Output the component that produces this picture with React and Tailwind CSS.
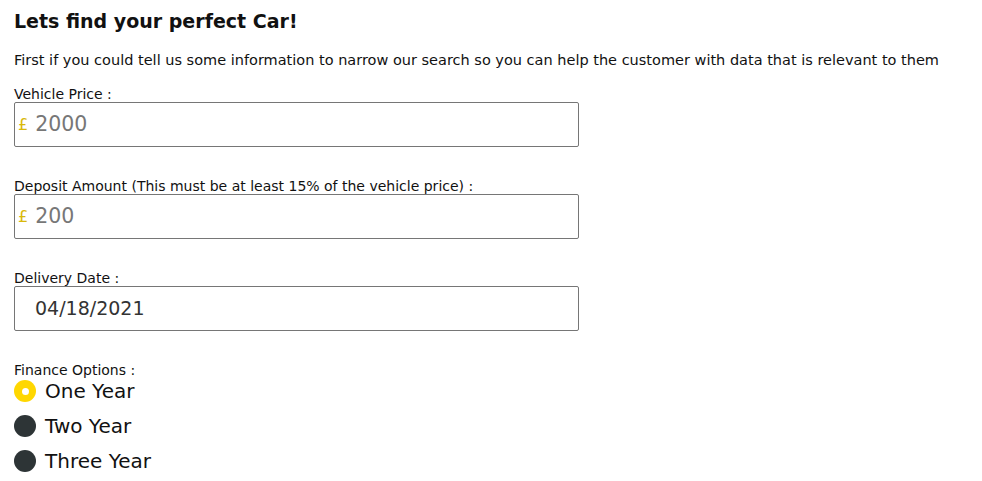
import { useState } from 'react';

const font = { fontFamily: '"DejaVu Sans", sans-serif' };

function MoneyField({ label, value }) {
  return (
    <div className="flex flex-col">
      <label className="text-[14px] leading-[16px] text-[#111]">{label}</label>
      <div className="w-[565px] h-[45px] border border-[#767676] rounded-[2px] flex items-center pl-[3px]">
        <span className="text-[16px] text-[#d9b80b] mr-[7px]">£</span>
        <span className="text-[20.5px] text-[#777]">{value}</span>
      </div>
    </div>
  );
}

export default function App() {
  const [choice, setChoice] = useState('one');
  const options = [
    { id: 'one', label: 'One Year' },
    { id: 'two', label: 'Two Year' },
    { id: 'three', label: 'Three Year' },
  ];

  return (
    <div className="min-h-screen bg-white px-[14px] pt-[8px]" style={font}>
      <h1 className="text-[19px] font-bold text-[#111] leading-[26px]">Lets find your perfect Car!</h1>
      <p className="text-[14.5px] text-[#111] mt-[18px] leading-[16px] whitespace-nowrap">
        First if you could tell us some information to narrow our search so you can help the customer with data that is relevant to them
      </p>

      <div className="mt-[18px] flex flex-col gap-[31px]">
        <MoneyField label="Vehicle Price :" value="2000" />
        <MoneyField label="Deposit Amount (This must be at least 15% of the vehicle price) :" value="200" />
        <div className="flex flex-col">
          <label className="text-[14px] leading-[16px] text-[#111]">Delivery Date :</label>
          <div className="w-[565px] h-[45px] border border-[#767676] rounded-[2px] flex items-center pl-[20px]">
            <span className="text-[19px] text-[#333]">04/18/2021</span>
          </div>
        </div>
      </div>

      <div className="mt-[31px] flex flex-col">
        <span className="text-[14px] leading-[16px] text-[#111]">Finance Options :</span>
        <div className="flex flex-col gap-[13px] mt-[2px]">
          {options.map((o) => (
            <button
              key={o.id}
              onClick={() => setChoice(o.id)}
              className="flex items-center gap-[9px] h-[22px] text-left"
            >
              {choice === o.id ? (
                <span className="w-[22px] h-[22px] rounded-full bg-[#ffd700] flex items-center justify-center">
                  <span className="w-[7px] h-[7px] rounded-full bg-white" />
                </span>
              ) : (
                <span className="w-[22px] h-[22px] rounded-full bg-[#2d3436]" />
              )}
              <span className="text-[20px] text-[#111]">{o.label}</span>
            </button>
          ))}
        </div>
      </div>
    </div>
  );
}
